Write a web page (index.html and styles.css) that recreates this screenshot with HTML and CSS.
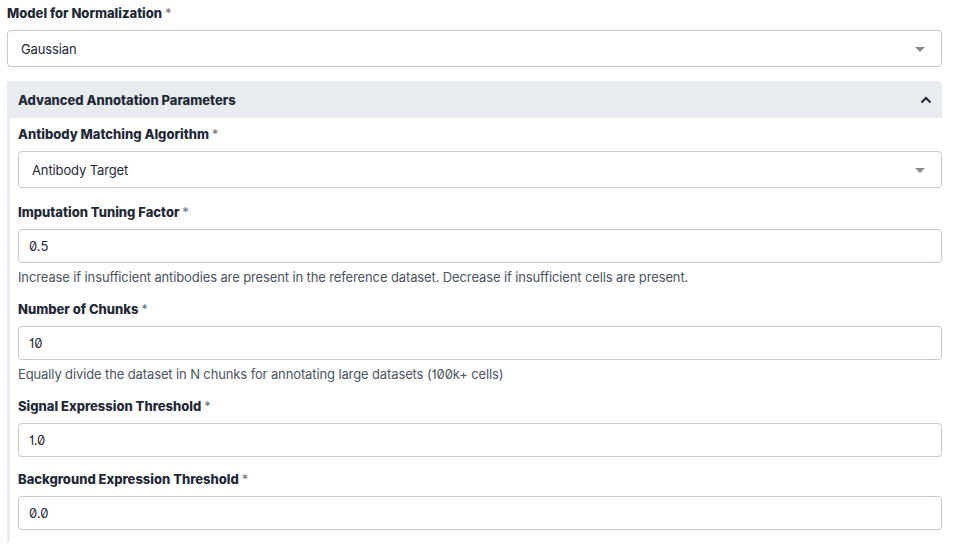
FILE: index.html
```html
<!DOCTYPE html>
<html lang="en">
<head>
  <meta charset="UTF-8">
  <meta name="viewport" content="width=device-width, initial-scale=1.0">
  <title>Annotation Parameters</title>
  <link rel="stylesheet" href="styles.css">
</head>
<body>
  <div class="form">
    <div class="field field-select">
      <label>Model for Normalization <span class="req">*</span></label>
      <div class="select">
        <span>Gaussian</span>
        <span class="caret"></span>
      </div>
    </div>

    <div class="panel">
      <div class="panel-header">
        <span>Advanced Annotation Parameters</span>
        <svg class="chevron" width="12" height="8" viewBox="0 0 12 8">
          <path d="M1.5 6.5 L6 2 L10.5 6.5" fill="none" stroke="#1f2937" stroke-width="2"/>
        </svg>
      </div>
      <div class="panel-body">
        <div class="field field-select">
          <label>Antibody Matching Algorithm <span class="req">*</span></label>
          <div class="select">
            <span>Antibody Target</span>
            <span class="caret"></span>
          </div>
        </div>

        <div class="field">
          <label>Imputation Tuning Factor <span class="req">*</span></label>
          <input type="text" value="0.5">
          <div class="help">Increase if insufficient antibodies are present in the reference dataset. Decrease if insufficient cells are present.</div>
        </div>

        <div class="field">
          <label>Number of Chunks <span class="req">*</span></label>
          <input type="text" value="10">
          <div class="help">Equally divide the dataset in N chunks for annotating large datasets (100k+ cells)</div>
        </div>

        <div class="field">
          <label>Signal Expression Threshold <span class="req">*</span></label>
          <input type="text" value="1.0">
        </div>

        <div class="field last">
          <label>Background Expression Threshold <span class="req">*</span></label>
          <input type="text" value="0.0">
        </div>
      </div>
    </div>
  </div>
</body>
</html>
```

FILE: styles.css
```css
body {
  font-family: Inter, "Noto Sans", sans-serif;
  font-size: 13px;
  font-feature-settings: "zero" 1, "cv01" 1;
  letter-spacing: -0.12px;
  color: #1f2937;
  background: #fff;
  margin: 0;
  padding: 0;
}
.form {
  margin: 3px 16px 0 7px;
}
.field {
  margin-bottom: 12px;
}
.field-select {
  margin-bottom: 14px;
}
.field.last {
  margin-bottom: 0;
}
label {
  display: block;
  font-weight: 800;
  letter-spacing: 0;
  line-height: 20px;
  margin-bottom: 7px;
  color: #1f2937;
}
.req {
  font-weight: 400;
  color: #6b7280;
}
.select {
  height: 37px;
  box-sizing: border-box;
  border: 1px solid #c3c9d4;
  border-radius: 4px;
  padding: 0 16px 0 13px;
  display: flex;
  align-items: center;
  justify-content: space-between;
  background: #fff;
}
.panel-body .select {
  margin-top: 1px;
}
.caret {
  width: 0;
  height: 0;
  border-left: 5px solid transparent;
  border-right: 5px solid transparent;
  border-top: 5px solid #8a8a8a;
  margin-top: 1px;
}
input {
  display: block;
  width: 100%;
  height: 34px;
  box-sizing: border-box;
  border: 1px solid #c3c9d4;
  border-radius: 4px;
  padding: 0 10px;
  font-family: inherit;
  font-size: 13px;
  font-feature-settings: "zero" 1, "cv01" 1;
  color: #1f2937;
  background: #fff;
}
.help {
  line-height: 20px;
  margin-top: 4px;
  color: #4b5563;
}
.panel {
  border-radius: 4px 4px 0 0;
  padding-bottom: 12px;
  border-left: 3px solid #e8ebef;
}
.panel-header {
  height: 37px;
  margin-left: -3px;
  background: #e8ebef;
  border-radius: 4px 4px 0 0;
  display: flex;
  align-items: center;
  justify-content: space-between;
  padding: 0 10px 0 11px;
  font-weight: 800;
  letter-spacing: 0;
}
.chevron {
  display: block;
}
.panel-body {
  padding: 6px 0 0 8px;
}
```
